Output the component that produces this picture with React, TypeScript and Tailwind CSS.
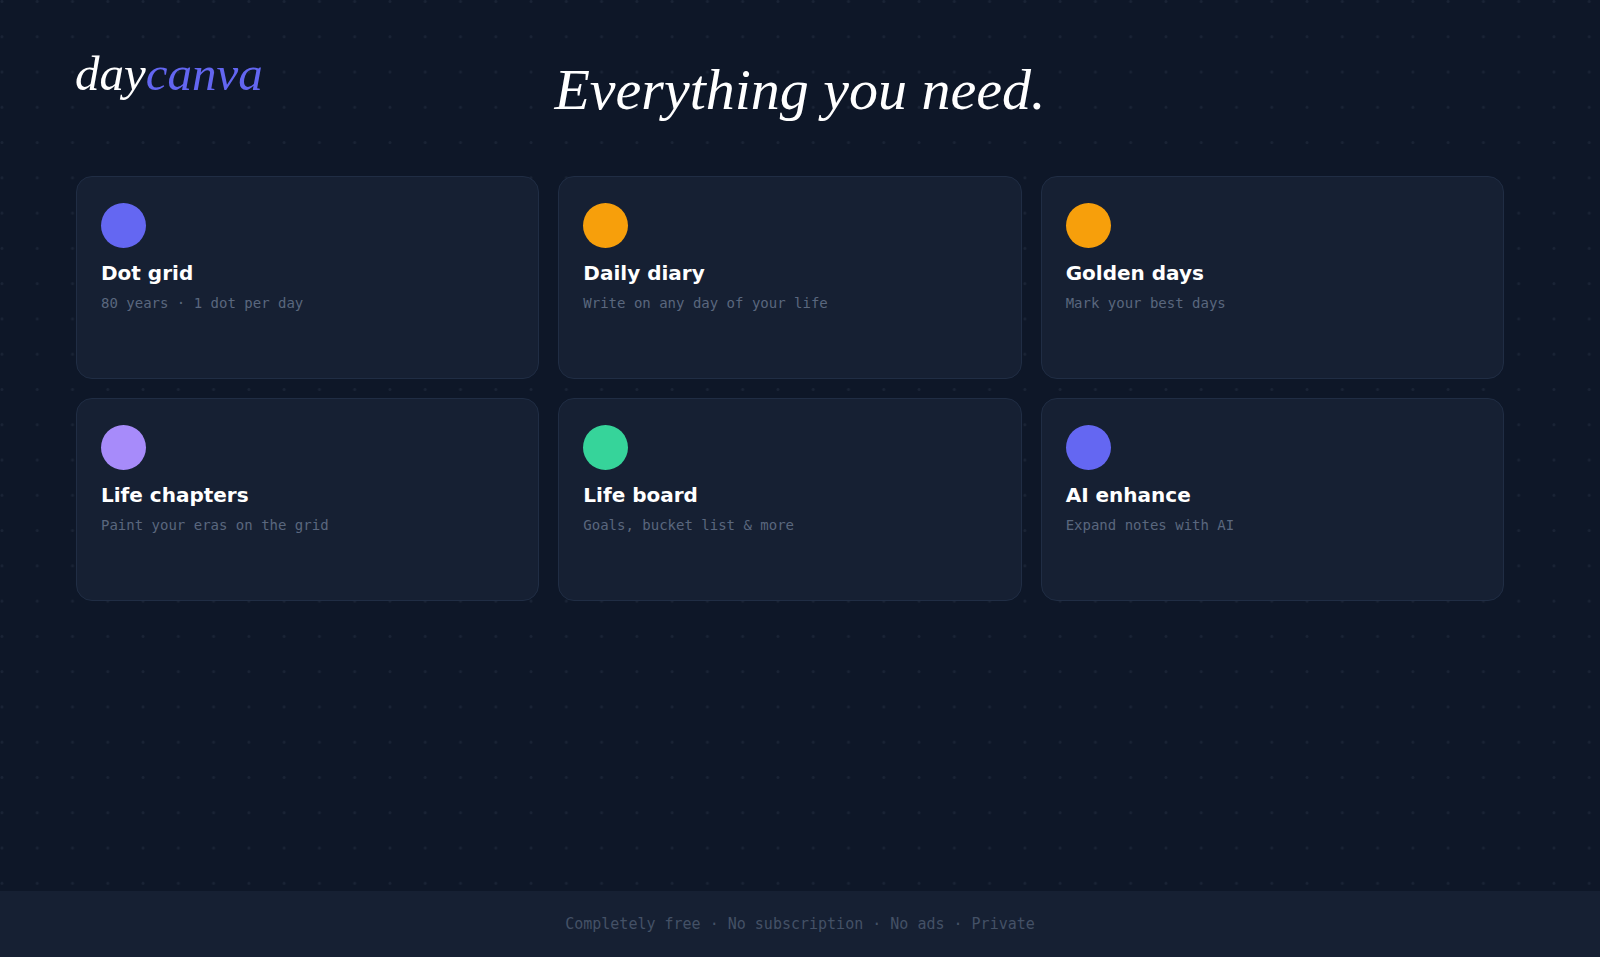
import React from 'react';

interface Feature {
  title: string;
  text: string;
  dot: string;
}

const features: Feature[] = [
  { title: 'Dot grid', text: '80 years · 1 dot per day', dot: 'bg-[#6467f2]' },
  { title: 'Daily diary', text: 'Write on any day of your life', dot: 'bg-[#f79f0b]' },
  { title: 'Golden days', text: 'Mark your best days', dot: 'bg-[#f79f0b]' },
  { title: 'Life chapters', text: 'Paint your eras on the grid', dot: 'bg-[#a78bfa]' },
  { title: 'Life board', text: 'Goals, bucket list & more', dot: 'bg-[#36d49a]' },
  { title: 'AI enhance', text: 'Expand notes with AI', dot: 'bg-[#6467f2]' },
];

const DotBackground: React.FC = () => (
  <svg
    className="absolute inset-0 h-full w-full"
    viewBox="0 0 1633 977"
    preserveAspectRatio="xMinYMin slice"
    aria-hidden="true"
  >
    <defs>
      <pattern id="dots" width="36" height="36" patternUnits="userSpaceOnUse">
        <circle cx="2" cy="1.6" r="1.5" fill="#1a2436" />
      </pattern>
    </defs>
    <rect width="1633" height="977" fill="url(#dots)" />
  </svg>
);

const FeatureCard: React.FC<{ feature: Feature }> = ({ feature }) => (
  <article className="min-h-[203px] rounded-2xl border border-[#202d44] bg-[#162033] px-6 py-[26px]">
    <div className={`h-[45px] w-[45px] rounded-full ${feature.dot}`} />
    <h2 className="mt-[11px] font-['DejaVu_Sans',sans-serif] text-xl leading-7 font-bold text-white">
      {feature.title}
    </h2>
    <p className="mt-1.5 font-['DejaVu_Sans_Mono',monospace] text-sm leading-5 text-[#5a677e]">
      {feature.text}
    </p>
  </article>
);

export default function App() {
  return (
    <div className="relative flex min-h-screen flex-col overflow-hidden bg-[#0e1728]">
      <DotBackground />

      <header className="relative grid grid-cols-[1fr_auto_1fr] items-start px-[75px] pt-[46px] font-['Liberation_Serif',serif] italic">
        <a href="#" className="text-[49px] leading-[56px] text-white">
          day<span className="text-[#6366f1]">canva</span>
        </a>
        <h1 className="pt-2 text-[58px] leading-[72px] text-white">Everything you need.</h1>
      </header>

      <main className="relative flex-1 pt-[50px] pr-24 pb-12 pl-[76px]">
        <div className="grid grid-cols-3 gap-[19px]">
          {features.map((feature) => (
            <FeatureCard key={feature.title} feature={feature} />
          ))}
        </div>
      </main>

      <footer className="relative bg-[#162033] py-[21px] text-center font-['DejaVu_Sans_Mono',monospace] text-[15px] leading-6 text-[#445166]">
        Completely free · No subscription · No ads · Private
      </footer>
    </div>
  );
}
